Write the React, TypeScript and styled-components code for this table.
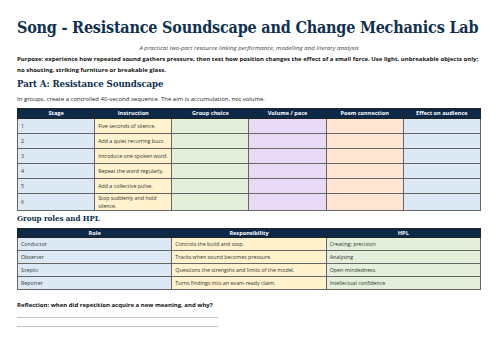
import styled, { createGlobalStyle } from "styled-components";

const GlobalStyle = createGlobalStyle`
  html, body {
    margin: 0;
    padding: 0;
    background: #fff;
  }
  body {
    font-family: "Open Sans", "Noto Sans", sans-serif;
    color: #222;
  }
`;

const colors = {
  navy: "#10304f",
  header: "#0c2a47",
  blue: "#dce9f5",
  yellow: "#fff2cc",
  green: "#e3efda",
  purple: "#e8daf4",
  peach: "#fde4d3",
  border: "#666",
};

const serif = `"DejaVu Serif Condensed", "DejaVu Serif", serif`;

const Page = styled.div`
  padding: 18px 19px 0 17px;
  width: 464px;
`;

const Title = styled.h1`
  margin: 0;
  font-family: ${serif};
  font-stretch: condensed;
  font-weight: bold;
  font-size: 16px;
  line-height: 20px;
  color: ${colors.navy};
  white-space: nowrap;
  letter-spacing: -0.2px;
`;

const Subtitle = styled.p`
  margin: 5px 0 0;
  text-align: center;
  font-style: italic;
  font-size: 6.1px;
  line-height: 9px;
  color: #444;
`;

const Purpose = styled.p`
  margin: 2px 0 0;
  font-weight: bold;
  font-size: 6px;
  line-height: 10.5px;
  color: #111;
`;

const Heading = styled.h2<{ $size: number; $lh: number; $top: number }>`
  margin: ${(p) => p.$top}px 0 0;
  font-family: ${serif};
  font-stretch: condensed;
  font-weight: bold;
  font-size: ${(p) => p.$size}px;
  line-height: ${(p) => p.$lh}px;
  color: ${colors.navy};
  letter-spacing: -0.1px;
  white-space: nowrap;
`;

const Intro = styled.p`
  margin: 4px 0 4px;
  font-size: 6px;
  line-height: 9px;
  color: #222;
`;

const Table = styled.table<{ $top: number }>`
  width: 100%;
  margin-top: ${(p) => p.$top}px;
  border-collapse: collapse;
  table-layout: fixed;
  border: 1.5px solid #333;
`;

const Th = styled.th<{ $h: number }>`
  background: ${colors.header};
  color: #fff;
  font-size: 5.6px;
  font-weight: bold;
  height: ${(p) => p.$h}px;
  padding: 0 3px;
  line-height: 7px;
  border: 1px solid #222;
`;

const Td = styled.td<{ $bg: string; $h: number }>`
  background: ${(p) => p.$bg};
  height: ${(p) => p.$h}px;
  padding: 0 3px;
  font-size: 5.3px;
  line-height: 8px;
  color: #333;
  border: 1px solid ${colors.border};
  vertical-align: middle;
`;

const Reflection = styled.p`
  margin: 10px 0 0;
  font-weight: bold;
  font-size: 6px;
  line-height: 10px;
  color: #111;
`;

const Line = styled.div<{ $top: number }>`
  width: 201px;
  height: 1px;
  background: #c4c4c4;
  margin-top: ${(p) => p.$top}px;
`;

const stages = [
  "Five seconds of silence.",
  "Add a quiet recurring buzz.",
  "Introduce one spoken word.",
  "Repeat the word regularly.",
  "Add a collective pulse.",
  "Stop suddenly and hold silence.",
];

const stageCols = [colors.blue, colors.yellow, colors.green, colors.purple, colors.peach, colors.blue];

const roles = [
  ["Conductor", "Controls the build and stop.", "Creating; precision"],
  ["Observer", "Tracks when sound becomes pressure.", "Analysing"],
  ["Sceptic", "Questions the strengths and limits of the model.", "Open-mindedness"],
  ["Reporter", "Turns findings into an exam-ready claim.", "Intellectual confidence"],
];

const roleCols = [colors.blue, colors.yellow, colors.green];

export default function App() {
  return (
    <Page>
      <GlobalStyle />
      <Title>Song - Resistance Soundscape and Change Mechanics Lab</Title>
      <Subtitle>A practical two-part resource linking performance, modelling and literary analysis</Subtitle>
      <Purpose>
        Purpose: experience how repeated sound gathers pressure, then test how position changes the effect of a
        small force. Use light, unbreakable objects only; no shouting, striking furniture or breakable glass.
      </Purpose>
      <Heading $size={9.6} $lh={14} $top={2}>
        Part A: Resistance Soundscape
      </Heading>
      <Intro>In groups, create a controlled 40-second sequence. The aim is accumulation, not volume.</Intro>
      <Table $top={0}>
        <thead>
          <tr>
            {["Stage", "Instruction", "Group choice", "Volume / pace", "Poem connection", "Effect on audience"].map(
              (h) => (
                <Th key={h} $h={9}>
                  {h}
                </Th>
              )
            )}
          </tr>
        </thead>
        <tbody>
          {stages.map((s, i) => (
            <tr key={s}>
              {stageCols.map((c, j) => (
                <Td key={j} $bg={c} $h={i === 5 ? 15.5 : 14}>
                  {j === 0 ? i + 1 : j === 1 ? s : ""}
                </Td>
              ))}
            </tr>
          ))}
        </tbody>
      </Table>
      <Heading $size={8} $lh={13} $top={1}>
        Group roles and HPL
      </Heading>
      <Table $top={3}>
        <thead>
          <tr>
            {["Role", "Responsibility", "HPL"].map((h) => (
              <Th key={h} $h={8}>
                {h}
              </Th>
            ))}
          </tr>
        </thead>
        <tbody>
          {roles.map((r) => (
            <tr key={r[0]}>
              {r.map((t, j) => (
                <Td key={j} $bg={roleCols[j]} $h={12}>
                  {t}
                </Td>
              ))}
            </tr>
          ))}
        </tbody>
      </Table>
      <Reflection>Reflection: when did repetition acquire a new meaning, and why?</Reflection>
      <Line $top={7} />
      <Line $top={8} />
    </Page>
  );
}
